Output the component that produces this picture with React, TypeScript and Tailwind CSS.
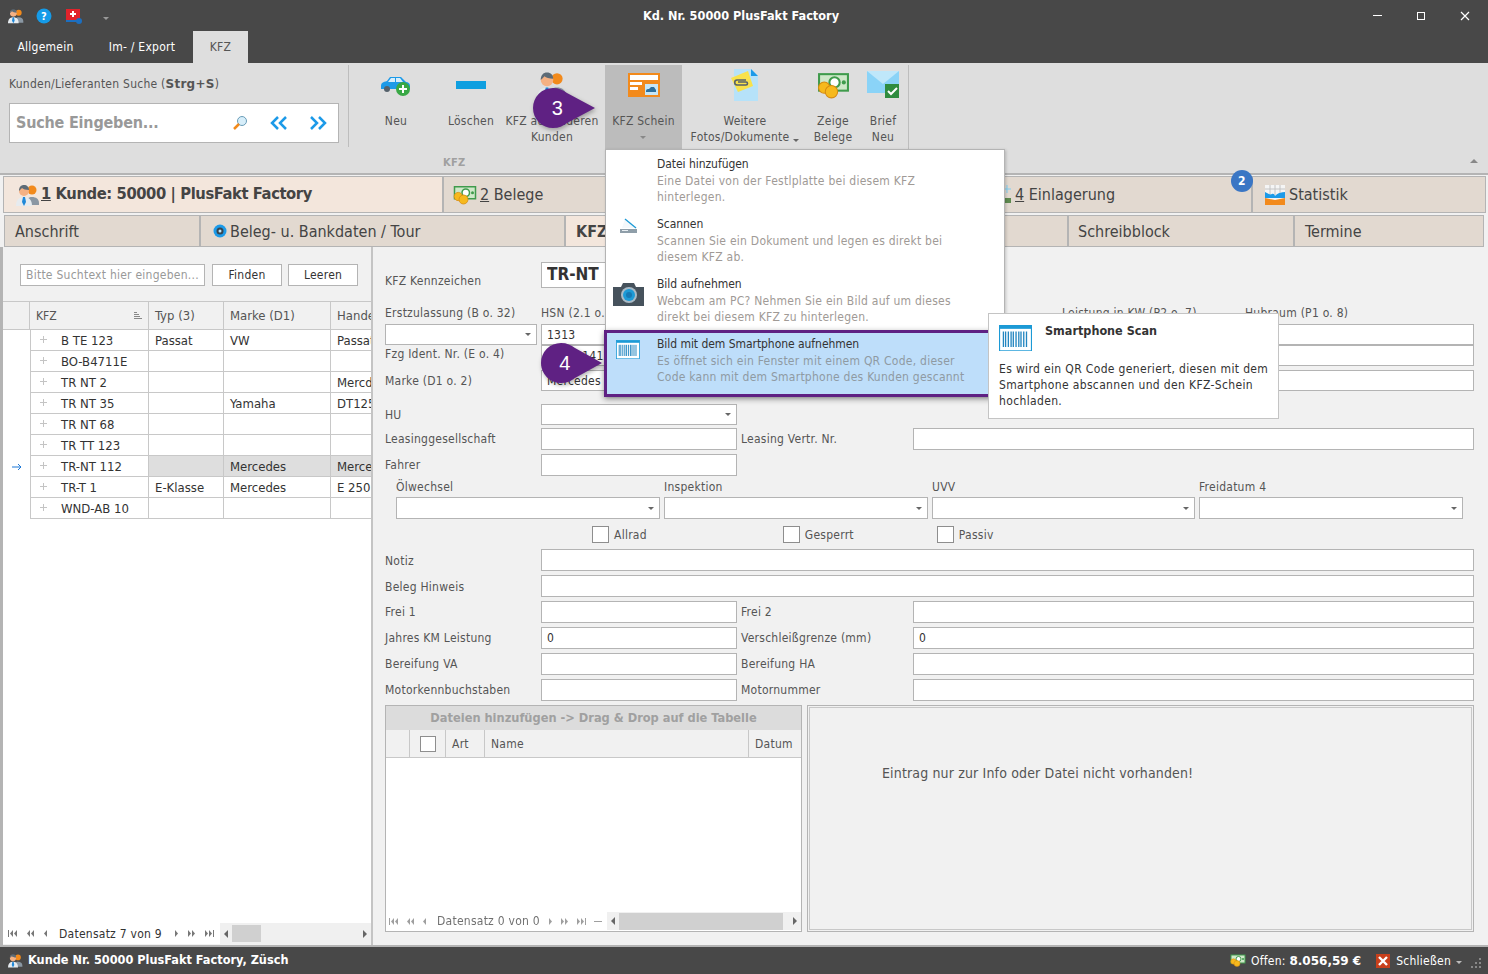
import type { ReactNode } from 'react';

const People = ({ size = 24 }: { size?: number }) => (
  <svg width={size} height={size} viewBox="0 0 24 24">
    <circle cx="16" cy="7" r="4.5" fill="#f28a1c" />
    <path d="M10 22c0-6 2-8 6-8s7 2 7 6v2z" fill="#8a97a3" />
    <circle cx="8" cy="8" r="5" fill="#f5b183" />
    <path d="M3 8c0-4 2-6 5-6s5 2 5 5c-3 0-6-1-7-2-1 1-2 2-3 3z" fill="#5d6b76" />
    <path d="M0 23c0-6 3-9 8-9s8 3 8 9z" fill="#e6ebef" />
    <path d="M7 14h2l1 5-2 4-2-4z" fill="#1f88d8" />
  </svg>
);

const Money = ({ w = 30, h = 24 }: { w?: number; h?: number }) => (
  <svg width={w} height={h} viewBox="0 0 32 26">
    <rect x="1" y="1" width="30" height="18" fill="#3f9b4c" />
    <rect x="3" y="3" width="26" height="14" fill="#cfe8c9" />
    <circle cx="17" cy="10" r="5" fill="#fff" stroke="#3f9b4c" strokeWidth="2" />
    <circle cx="26" cy="10" r="2" fill="#3f9b4c" />
    <circle cx="7" cy="15" r="5.5" fill="#f6b91d" stroke="#d58a10" />
    <circle cx="14" cy="19" r="6" fill="#f6b91d" stroke="#d58a10" />
  </svg>
);

const Barcode = ({ size = 24 }: { size?: number }) => (
  <svg width={size} height={size * 0.8} viewBox="0 0 30 24">
    <rect x="0.5" y="0.5" width="29" height="23" fill="#fff" stroke="#1c9ad6" />
    <rect x="0.5" y="0.5" width="29" height="3" fill="#1c9ad6" />
    <path d="M4 6v14M6 6v14M8.500 6v14M11 6v14M13 6v14M15.500 6v14M18 6v14M20 6v14M22.500 6v14M25 6v14" stroke="#2386c0" strokeWidth="1.200" />
  </svg>
);

const Caret = ({ className = 'border-t-[#666]' }: { className?: string }) => (
  <span className={`inline-block h-0 w-0 border-x-[3px] border-t-[3px] border-x-transparent ${className}`} />
);

const Field = ({ className = '', value = '', combo = false }: { className?: string; value?: string; combo?: boolean }) => (
  <div className={`flex items-center justify-between border border-[#b4b4b4] bg-white px-[5px] text-[#333] ${className}`}>
    <span className="truncate">{value}</span>
    {combo && <Caret />}
  </div>
);

const RibbonBtn = ({ w, icon, lines, caret = false, active = false, caretBelow = false }: { w: string; icon: ReactNode; lines: string[]; caret?: boolean; active?: boolean; caretBelow?: boolean }) => (
  <div className={`flex h-[84px] flex-col items-center ${w} ${active ? 'bg-[#bcbcbc]' : ''}`}>
    <div className="flex h-[40px] items-center justify-center">{icon}</div>
    <div className="mt-[8px] text-center leading-[16px] text-[#555]">
      {lines.map((l, i) => (
        <div key={l} className="whitespace-nowrap">
          {l}
          {caret && i === lines.length - 1 && (
            <span className="ml-1 inline-block align-middle">
              <Caret />
            </span>
          )}
        </div>
      ))}
      {caretBelow && (
        <div className="leading-[12px]">
          <Caret className="border-t-[#888]" />
        </div>
      )}
    </div>
  </div>
);

const Tab = ({ w, children, active = false, bold = false }: { w: string; children?: ReactNode; active?: boolean; bold?: boolean }) => (
  <div
    className={`flex h-full shrink-0 items-center overflow-hidden whitespace-nowrap border border-[#b4b4b4] ${w} ${active ? 'bg-[#f3e6dc]' : 'bg-[#e2d9d0]'} ${bold ? 'font-bold' : ''}`}
  >
    {children}
  </div>
);

const grid = [
  ['B TE 123', 'Passat', 'VW', 'Passat'],
  ['BO-B4711E', '', '', ''],
  ['TR NT 2', '', '', 'Mercd'],
  ['TR NT 35', '', 'Yamaha', 'DT125'],
  ['TR NT 68', '', '', ''],
  ['TR TT 123', '', '', ''],
  ['TR-NT 112', '', 'Mercedes', 'Merce'],
  ['TR-T 1', 'E-Klasse', 'Mercedes', 'E 250'],
  ['WND-AB 10', '', '', ''],
];

const NavGlyph = ({ n, bar = false }: { n: number; bar?: boolean }) => (
  <svg width={n * 4 + (bar ? 2 : 0)} height="7" viewBox={`0 0 ${n * 4 + (bar ? 2 : 0)} 7`} fill="#777">
    {bar && <rect x="0" y="0" width="1" height="7" />}
    {Array.from({ length: n }).map((_, i) => (
      <path key={i} d={`M${(bar ? 2 : 0) + i * 4 + 3} 0v7L${(bar ? 2 : 0) + i * 4} 3.500z`} />
    ))}
  </svg>
);

const NavGlyphR = ({ n, bar = false }: { n: number; bar?: boolean }) => (
  <span className="inline-flex -scale-x-100">
    <NavGlyph n={n} bar={bar} />
  </span>
);

const Pager = ({ text, compact = false }: { text: string; compact?: boolean }) => (
  <div className={`flex items-center ${compact ? 'opacity-70' : ''}`}>
    <div className={`flex items-center ${compact ? 'gap-[8px]' : 'gap-[9px]'}`}>
      <NavGlyph n={2} bar />
      <NavGlyph n={2} />
      <NavGlyph n={1} />
    </div>
    <span className={`whitespace-nowrap text-[#333] ${compact ? 'ml-[10px] mr-[8px]' : 'ml-[11px] mr-[12px]'}`}>{text}</span>
    <div className={`flex items-center ${compact ? 'gap-[8px]' : 'gap-[9px]'}`}>
      <NavGlyphR n={1} />
      <NavGlyphR n={2} />
      <NavGlyphR n={2} bar />
      {compact && <span className="h-px w-[8px] bg-[#777]" />}
    </div>
  </div>
);

const Scrollbar = ({ className, thumb }: { className: string; thumb: string }) => (
  <div className={`flex items-center bg-[#f0f0f0] ${className}`}>
    <span className="mx-[4px] h-0 w-0 border-y-[4px] border-r-[4px] border-y-transparent border-r-[#666]" />
    <div className={`h-[17px] bg-[#d0d0d0] ${thumb}`} />
    <div className="flex-1" />
    <span className="mx-[4px] h-0 w-0 border-y-[4px] border-l-[4px] border-y-transparent border-l-[#666]" />
  </div>
);

const FormRow = ({ top, label, label2, value = '', value2 = '' }: { top: string; label: string; label2: string; value?: string; value2?: string }) => (
  <div className={`flex h-[22px] items-center ${top}`}>
    <span className="w-[156px] text-[#555]">{label}</span>
    <Field className="h-full w-[196px]" value={value} />
    <span className="w-[176px] pl-[4px] text-[#555]">{label2}</span>
    <Field className="h-full w-[561px]" value={value2} />
  </div>
);

const Check = ({ label, className }: { label: string; className: string }) => (
  <div className={`flex items-center gap-[5px] text-[#555] ${className}`}>
    <span className="h-[17px] w-[17px] border border-[#8e8e8e] bg-white" />
    {label}
  </div>
);

const menu = [
  { t: 'Datei hinzufügen', d: ['Eine Datei von der Festlplatte bei diesem KFZ', 'hinterlegen.'], icon: null },
  {
    t: 'Scannen',
    d: ['Scannen Sie ein Dokument und legen es direkt bei', 'diesem KFZ ab.'],
    icon: (
      <svg width="17" height="15" viewBox="0 0 17 15" className="mt-[2px]">
        <path d="M2 10 5 1l11 9z" fill="#f4f8fb" />
        <path d="M5 1l11 9" fill="none" stroke="#1c9ad6" strokeWidth="1.300" />
        <rect x="0" y="11" width="17" height="4" fill="#8f9ea9" />
        <rect x="2" y="12" width="6" height="1" fill="#e8eef2" />
      </svg>
    ),
  },
  {
    t: 'Bild aufnehmen',
    d: ['Webcam am PC? Nehmen Sie ein Bild auf um dieses', 'direkt bei diesem KFZ zu hinterlegen.'],
    icon: (
      <svg width="33" height="26" viewBox="0 0 33 26" className="mt-[5px]">
        <path d="M1 6h8l2-4h11l2 4h8v19H1z" fill="#46525c" />
        <circle cx="17" cy="14" r="8" fill="#a9bac6" />
        <circle cx="17" cy="14" r="6" fill="#1c9ad6" />
        <circle cx="17" cy="14" r="3" fill="#1679b4" />
      </svg>
    ),
  },
];

export default function App() {
  return (
    <div className="relative flex h-[974px] w-[1488px] flex-col overflow-hidden bg-[#f1f1f1] font-['DejaVu_Sans','Noto_Sans',sans-serif] text-[12px] tracking-[0.25px] [font-stretch:condensed] text-[#444]">
      {/* title bar */}
      <div className="flex h-[31px] shrink-0 items-center bg-[#484848] pl-[8px] pr-[18px]">
        <People size={16} />
        <svg width="16" height="16" viewBox="0 0 16 16" className="ml-[12px]">
          <circle cx="8" cy="8" r="7.500" fill="#159be8" />
          <text x="8" y="12" textAnchor="middle" fontSize="11" fontWeight="700" fill="#fff">?</text>
        </svg>
        <svg width="16" height="16" viewBox="0 0 16 16" className="ml-[14px]">
          <rect x="0" y="1" width="14" height="11" fill="#e2232b" />
          <path d="M6 3h2v2h2v2H8v2H6V7H4V5h2z" fill="#fff" />
          <path d="M0 12h14v2H0z" fill="#1c6fc0" />
          <circle cx="13" cy="13" r="3" fill="#1c6fc0" />
        </svg>
        <span className="ml-[21px]">
          <Caret className="border-t-[#999]" />
        </span>
        <div className="flex-1 pt-px text-center text-[12.6px] font-bold tracking-normal text-white">Kd. Nr. 50000 PlusFakt Factory</div>
        <div className="flex items-center gap-[35px]">
          <span className="h-px w-[9px] bg-white" />
          <span className="h-[8px] w-[8px] border border-white" />
          <svg width="10" height="10" viewBox="0 0 10 10"><path d="M1 1l8 8M9 1l-8 8" stroke="#fff" strokeWidth="1.200" /></svg>
        </div>
      </div>

      {/* ribbon tabs */}
      <div className="flex h-[32px] shrink-0 items-stretch bg-[#484848]">
        <div className="flex w-[91px] items-center justify-center text-white">Allgemein</div>
        <div className="flex w-[102px] items-center justify-center text-white">Im- / Export</div>
        <div className="flex w-[55px] items-center justify-center bg-[#dedede] text-[#555]">KFZ</div>
      </div>

      {/* ribbon */}
      <div className="relative flex h-[110px] shrink-0 bg-[#dedede] pt-[2px]">
        <div className="w-[348px] pl-[9px] pt-[10px]">
          <div className="text-[#555]">
            Kunden/Lieferanten Suche (<b className="[font-stretch:normal]">Strg+S</b>)
          </div>
          <div className="mt-[10px] flex h-[40px] w-[330px] items-center border border-[#b4b4b4] bg-white pl-[6px]">
            <span className="w-[216px] text-[16px] font-bold tracking-[-0.2px] text-[#999]">Suche Eingeben...</span>
            <svg width="16" height="16" viewBox="0 0 16 16">
              <circle cx="10" cy="6" r="4.500" fill="#d7eefa" stroke="#6a9db8" />
              <path d="M7 9l-5 5" stroke="#f28a1c" strokeWidth="2.500" />
            </svg>
            <svg width="18" height="14" viewBox="0 0 18 14" className="ml-[22px]">
              <path d="M8 1 2 7l6 6M16 1l-6 6 6 6" fill="none" stroke="#1c9ae8" strokeWidth="2.500" />
            </svg>
            <svg width="18" height="14" viewBox="0 0 18 14" className="ml-[21px]">
              <path d="m2 1 6 6-6 6M10 1l6 6-6 6" fill="none" stroke="#1c9ae8" strokeWidth="2.500" />
            </svg>
          </div>
        </div>
        <div className="mb-[26px] w-px bg-[#bdbdbd]" />
        <div className="relative flex h-[84px] items-start">
          <RibbonBtn
            w="w-[94px]"
            lines={['Neu']}
            icon={
              <svg width="32" height="24" viewBox="0 0 32 24">
                <path d="M1 13c0-3 2-4 6-5l3-4h11l5 5c2 0 4 1 4 4v3H1z" fill="#1c9ae8" />
                <path d="M11 5h4v4H8zM16 5h4l3 4h-7z" fill="#d8eefb" />
                <circle cx="7" cy="16" r="3" fill="#55616b" />
                <circle cx="23" cy="16" r="7" fill="#39a845" />
                <path d="M23 12v8M19 16h8" stroke="#fff" strokeWidth="2" />
              </svg>
            }
          />
          <RibbonBtn w="w-[56px]" lines={['Löschen']} icon={<span className="h-[8px] w-[30px] bg-[#0f9fe0]" />} />
          <RibbonBtn w="w-[106px]" lines={['KFZ auf anderen', 'Kunden']} icon={<People size={30} />} />
          <RibbonBtn
            w="w-[77px]"
            active
            caretBelow
            lines={['KFZ Schein']}
            icon={
              <svg width="32" height="24" viewBox="0 0 32 24">
                <rect width="32" height="24" fill="#f28a1c" />
                <rect x="2" y="2" width="28" height="5" fill="#fff" />
                <rect x="2" y="9" width="12" height="3" fill="#fff" />
                <rect x="2" y="14" width="8" height="3" fill="#fff" />
                <rect x="17" y="11" width="13" height="11" fill="#c6e6f6" />
                <path d="M18 18c0-2 2-2 3-2l2-2h3l2 3v2H18z" fill="#2c6f9c" />
              </svg>
            }
          />
          <RibbonBtn
            w="w-[126px]"
            caret
            lines={['Weitere', 'Fotos/Dokumente']}
            icon={
              <svg width="30" height="34" viewBox="0 0 30 34">
                <path d="M4 1h17l7 7v25H4z" fill="#b6e2f9" />
                <path d="M21 1l7 7h-7z" fill="#1c9ae8" />
                <path d="M1 10 18 3l5 15-15 6z" fill="#f8e24c" />
                <path d="M16 12H7c-3 0-3 5 0 5h9c2 0 2-3 0-3H8" fill="none" stroke="#55616b" strokeWidth="1.600" />
              </svg>
            }
          />
          <RibbonBtn w="w-[50px]" lines={['Zeige', 'Belege']} icon={<Money w={33} h={27} />} />
          <RibbonBtn
            w="w-[50px]"
            lines={['Brief', 'Neu']}
            icon={
              <svg width="33" height="28" viewBox="0 0 33 28">
                <path d="M0 0h32v22H0z" fill="#8ad3f7" />
                <path d="M0 0l16 13L32 0z" fill="#bfe7fa" />
                <rect x="18" y="13" width="14" height="14" fill="#2f8c3f" />
                <path d="m21 20 3 3 6-6" fill="none" stroke="#fff" strokeWidth="2" />
              </svg>
            }
          />
          <div className="h-[84px] w-px bg-[#bdbdbd]" />
        </div>
        <span className="absolute left-[443px] top-[92px] text-[11px] font-bold text-[#a0a0a0]">KFZ</span>
        <svg width="8" height="5" viewBox="0 0 8 5" className="absolute left-[1470px] top-[95px]">
          <path d="M0 5l4-4 4 4z" fill="#888" />
        </svg>
      </div>

      {/* main tabs */}
      <div className="flex h-[40px] shrink-0 items-stretch gap-0 border-t-[2px] border-[#b4b4b4] bg-[#f1f1f1] pl-[3px] pr-[2px] pt-px text-[16px] tracking-normal">
        <Tab w="w-[440px]" active bold>
          <span className="ml-[12px] mr-[1px]"><People size={24} /></span>
          <span className="text-[16.4px] tracking-[-0.4px]"><u>1</u> Kunde: 50000 | PlusFakt Factory</span>
        </Tab>
        <Tab w="w-[270px]">
          <span className="ml-[9px] mr-[3px]"><Money w={24} h={20} /></span>
          <span><u>2</u> Belege</span>
        </Tab>
        <Tab w="w-[270px]" />
        <Tab w="w-[269px]">
          <svg width="16" height="22" viewBox="0 0 16 22" className="ml-[15px] shrink-0">
            <path d="M8 1v8M4 5h8" stroke="#7fd0f5" />
            <rect x="2" y="14" width="10" height="5" fill="#5e8a4f" />
          </svg>
          <span><u>4</u> Einlagerung</span>
        </Tab>
        <Tab w="w-[234px]">
          <svg width="22" height="22" viewBox="0 0 22 22" className="ml-[11px] mr-[3px] shrink-0">
            <rect x="1" y="1" width="20" height="20" fill="#f5f5f5" />
            <path d="M6 1v10M11 1v10M16 1v10M1 5h20" stroke="#c4c4c4" />
            <path d="M1 8c4 2 5 3 7 2s3 2 3 2 3-4 10-4v6H1z" fill="#1c9ae8" />
            <path d="M1 14l10 2 10-2v7H1z" fill="#f28a1c" />
          </svg>
          <span>Statistik</span>
        </Tab>
      </div>

      {/* sub tabs */}
      <div className="flex h-[34px] shrink-0 items-stretch pl-[4px] pt-[2px] text-[16px] tracking-normal">
        <Tab w="w-[196px]"><span className="ml-[10px] pt-px">Anschrift</span></Tab>
        <Tab w="w-[365px]">
          <svg width="14" height="14" viewBox="0 0 14 14" className="ml-[12px] mr-[3px]">
            <circle cx="7" cy="7" r="6.500" fill="#1c9ae8" />
            <circle cx="7" cy="7" r="3.500" fill="#38454f" />
            <circle cx="7" cy="7" r="1.500" fill="#bfe7fa" />
          </svg>
          <span className="pt-px">Beleg- u. Bankdaten / Tour</span>
        </Tab>
        <Tab w="w-[240px]" active bold><span className="ml-[10px] pt-px">KFZ</span></Tab>
        <Tab w="w-[263px]" />
        <Tab w="w-[226px]"><span className="ml-[9px] pt-px">Schreibblock</span></Tab>
        <Tab w="w-[190px]"><span className="ml-[10px] pt-px">Termine</span></Tab>
      </div>

      {/* body */}
      <div className="flex min-h-0 flex-1 border-b-[2px] border-l-[3px] border-[#b4b4b4]">
        {/* left list */}
        <div className="flex w-[370px] shrink-0 flex-col border-r-2 border-[#c4c4c4]">
          <div className="flex h-[54px] shrink-0 items-start gap-[7px] pl-[17px] pt-[17px]">
            <div className="flex h-[22px] w-[185px] items-center border border-[#b4b4b4] bg-white pl-[5px] text-[#999]">Bitte Suchtext hier eingeben...</div>
            <div className="flex h-[22px] w-[70px] items-center justify-center border border-[#b4b4b4] bg-white text-[#333]">Finden</div>
            <div className="-ml-px flex h-[22px] w-[70px] items-center justify-center border border-[#b4b4b4] bg-white text-[#333]">Leeren</div>
          </div>
          <div className="flex h-[29px] shrink-0 border-y border-[#c8c8c8] text-[13px] tracking-normal text-[#555]">
            <div className="w-[27px] border-r border-[#c8c8c8]" />
            <div className="flex w-[119px] items-center justify-between border-r border-[#c8c8c8] pl-[6px] pr-[6px] text-[12px]">
              KFZ
              <svg width="8" height="7" viewBox="0 0 8 7"><path d="M0 .5h3M0 2.500h5M0 4.500h6M0 6.500h8" stroke="#888" /></svg>
            </div>
            <div className="flex w-[75px] items-center border-r border-[#c8c8c8] pl-[6px]">Typ (3)</div>
            <div className="flex w-[107px] items-center border-r border-[#c8c8c8] pl-[6px]">Marke (D1)</div>
            <div className="flex w-[40px] items-center overflow-hidden whitespace-nowrap pl-[6px]">Hande</div>
          </div>
          <div className="flex-1 bg-white text-[13px] tracking-normal">
            {grid.map((r, i) => (
              <div key={r[0]} className="flex h-[21px] text-[#333]">
                <div className="flex w-[27px] items-center justify-center">
                  {i === 6 && (
                    <svg width="10" height="8" viewBox="0 0 10 8"><path d="M0 4h9M6 1l3 3-3 3" fill="none" stroke="#1c78d8" /></svg>
                  )}
                </div>
                <div className="flex w-[119px] items-center border-x border-b border-[#c8c8c8] pt-px">
                  <svg width="7" height="7" viewBox="0 0 7 7" className="ml-[9px] mr-[14px] mb-[2px]"><path d="M3.500 0v7M0 3.500h7" stroke="#c4c4c4" /></svg>
                  {r[0]}
                </div>
                <div className={`flex w-[75px] items-center border-b border-r border-[#c8c8c8] pl-[6px] pt-px ${i === 6 ? 'bg-[#dedede]' : ''}`}>{r[1]}</div>
                <div className={`flex w-[107px] items-center border-b border-r border-[#c8c8c8] pl-[6px] pt-px ${i === 6 ? 'bg-[#dedede]' : ''}`}>{r[2]}</div>
                <div className={`flex w-[40px] items-center overflow-hidden whitespace-nowrap border-b border-[#c8c8c8] pl-[6px] pt-px ${i === 6 ? 'bg-[#dedede]' : ''}`}>{r[3]}</div>
              </div>
            ))}
          </div>
          <div className="flex h-[21px] shrink-0 items-center bg-white pl-[5px]">
            <Pager text="Datensatz 7 von 9" />
            <Scrollbar className="ml-[6px] h-full flex-1" thumb="w-[29px] !h-[17px]" />
          </div>
          <div className="h-px shrink-0" />
        </div>

        {/* form */}
        <div className="flex min-w-0 flex-1 flex-col pl-[12px]">
          <div className="mt-[15px] flex h-[26px] items-center">
            <span className="w-[156px] pt-[11px] text-[#555]">KFZ Kennzeichen</span>
            <Field className="h-full w-[196px] text-[17px] font-bold tracking-normal" value="TR-NT" />
          </div>

          <div className="mt-[17px] flex h-[16px] items-center text-[#555]">
            <span className="w-[156px]">Erstzulassung (B o. 32)</span>
            <span className="w-[521px]">HSN (2.1 o. 2)</span>
            <span className="w-[183px]">Leistung in KW (P2 o. 7)</span>
            <span>Hubraum (P1 o. 8)</span>
          </div>
          <div className="mt-[3px] flex h-[21px]">
            <Field className="h-full w-[152px]" combo />
            <Field className="ml-[4px] h-full w-[196px]" value="1313" />
            <Field className="ml-[325px] h-full w-[179px]" />
            <Field className="ml-[4px] h-full w-[229px]" value="1597" />
          </div>
          <div className="flex h-[21px] items-center">
            <span className="w-[156px] pb-[3px] text-[#555]">Fzg Ident. Nr. (E o. 4)</span>
            <Field className="h-full w-[196px]" value="WDD2141234" />
            <Field className="ml-[325px] h-full w-[412px]" />
          </div>
          <div className="mt-[4px] flex h-[21px] items-center">
            <span className="w-[156px] text-[#555]">Marke (D1 o. 2)</span>
            <Field className="h-full w-[196px]" value="Mercedes" />
            <Field className="ml-[325px] h-full w-[412px]" />
          </div>
          <div className="mt-[13px] flex h-[21px] items-center">
            <span className="w-[156px] text-[#555]">HU</span>
            <Field className="h-full w-[196px]" combo />
          </div>
          <FormRow top="mt-[3px]" label="Leasinggesellschaft" label2="Leasing Vertr. Nr." />
          <div className="mt-[4px] flex h-[22px] items-center">
            <span className="w-[156px] text-[#555]">Fahrer</span>
            <Field className="h-full w-[196px]" />
          </div>
          <div className="mt-[2px] grid h-[17px] grid-cols-[268px_268px_267px_264px] pl-[11px] text-[#555]">
            <span>Ölwechsel</span>
            <span>Inspektion</span>
            <span>UVV</span>
            <span>Freidatum 4</span>
          </div>
          <div className="mt-[2px] grid h-[22px] grid-cols-[264px_264px_263px_264px] gap-x-[4px] pl-[11px]">
            <Field combo />
            <Field combo />
            <Field combo />
            <Field combo />
          </div>
          <div className="mt-[7px] flex h-[17px]">
            <Check label="Allrad" className="ml-[207px]" />
            <Check label="Gesperrt" className="ml-[136px]" />
            <Check label="Passiv" className="ml-[83px]" />
          </div>
          <div className="mt-[6px] flex h-[22px] items-center">
            <span className="w-[156px] pt-[2px] text-[#555]">Notiz</span>
            <Field className="h-full w-[933px]" />
          </div>
          <div className="mt-[4px] flex h-[22px] items-center">
            <span className="w-[156px] pt-[2px] text-[#555]">Beleg Hinweis</span>
            <Field className="h-full w-[933px]" />
          </div>
          <FormRow top="mt-[4px]" label="Frei 1" label2="Frei 2" />
          <FormRow top="mt-[4px]" label="Jahres KM Leistung" label2="Verschleißgrenze (mm)" value="0" value2="0" />
          <FormRow top="mt-[4px]" label="Bereifung VA" label2="Bereifung HA" />
          <FormRow top="mt-[4px]" label="Motorkennbuchstaben" label2="Motornummer" />

          <div className="mt-[4px] flex h-[227px]">
            <div className="flex w-[417px] flex-col border border-[#b4b4b4] bg-white">
              <div className="flex h-[24px] shrink-0 items-center justify-center bg-[#dcdcdc] text-[12.7px] font-bold tracking-normal text-[#a0a0a0]">Dateien hinzufügen -&gt; Drag &amp; Drop auf die Tabelle</div>
              <div className="flex h-[28px] shrink-0 border-b border-[#c8c8c8] bg-[#f1f1f1] text-[#555]">
                <div className="w-[24px] border-r border-[#c8c8c8]" />
                <div className="flex w-[36px] items-center justify-center border-r border-[#c8c8c8]">
                  <span className="h-[16px] w-[16px] border border-[#8e8e8e] bg-white" />
                </div>
                <div className="flex w-[39px] items-center border-r border-[#c8c8c8] pl-[6px]">Art</div>
                <div className="flex w-[264px] items-center border-r border-[#c8c8c8] pl-[6px]">Name</div>
                <div className="flex flex-1 items-center pl-[6px]">Datum</div>
              </div>
              <div className="flex-1" />
              <div className="flex h-[18px] shrink-0 items-center pl-[3px]">
                <Pager text="Datensatz 0 von 0" compact />
                <Scrollbar className="ml-[5px] h-full flex-1" thumb="w-[164px]" />
              </div>
              <div className="h-px" />
            </div>
            <div className="ml-[5px] flex w-[667px] items-start border border-[#b4b4b4] p-px">
              <div className="h-full w-full border border-[#c8c8c8] pl-[72px] pt-[55px] text-[14px] tracking-[0.15px] text-[#555]">Eintrag nur zur Info oder Datei nicht vorhanden!</div>
            </div>
          </div>
        </div>
      </div>

      {/* status bar */}
      <div className="flex h-[27px] shrink-0 items-center bg-[#484848] pl-[8px] pr-[6px] text-white">
        <People size={15} />
        <span className="ml-[5px] text-[12.6px] font-bold tracking-normal">Kunde Nr. 50000 PlusFakt Factory, Züsch</span>
        <div className="flex-1" />
        <Money w={16} h={13} />
        <span className="ml-[5px]">Offen: <b className="text-[12px] tracking-normal [font-stretch:normal]">8.056,59 €</b></span>
        <span className="ml-[15px] flex h-[14px] w-[14px] items-center justify-center bg-[#c8401c]">
          <svg width="10" height="10" viewBox="0 0 10 10"><path d="M1 1l8 8M9 1l-8 8" stroke="#fff" strokeWidth="2.400" /></svg>
        </span>
        <span className="ml-[6px]">Schließen</span>
        <span className="ml-[5px] mb-[2px]"><Caret className="border-t-[#bbb]" /></span>
        <svg width="11" height="11" viewBox="0 0 11 11" className="ml-[9px] mt-[6px]" fill="#888">
          <rect x="8" y="0" width="2" height="2" />
          <rect x="4" y="4" width="2" height="2" />
          <rect x="8" y="4" width="2" height="2" />
          <rect x="0" y="8" width="2" height="2" />
          <rect x="4" y="8" width="2" height="2" />
          <rect x="8" y="8" width="2" height="2" />
        </svg>
      </div>

      {/* dropdown menu */}
      <div className="absolute left-[605px] top-[149px] h-[247px] w-[400px] border border-[#b4b4b4] bg-white pt-[6px] shadow-[1px_1px_3px_rgba(0,0,0,0.2)]">
        {menu.map((m) => (
          <div key={m.t} className="flex h-[60px]">
            <div className="flex w-[44px] shrink-0 items-start justify-center">{m.icon}</div>
            <div className="ml-[7px] leading-[16px]">
              <div className="h-[17px] tracking-[-0.05px] text-[#333]">{m.t}</div>
              {m.d.map((l) => (
                <div key={l} className="text-[#a09a96]">{l}</div>
              ))}
            </div>
          </div>
        ))}
      </div>

      {/* highlighted item */}
      <div className="absolute left-[604px] top-[330px] flex h-[67px] w-[392px] border-[3px] border-[#5f2183] bg-[#bedefa] shadow-[0_2px_6px_rgba(0,0,0,0.4)]">
        <div className="mr-[8px] flex w-[42px] shrink-0 justify-center pt-[7px]"><Barcode /></div>
        <div className="pt-[3px] leading-[16px]">
          <div className="h-[17px] tracking-[-0.05px] text-[#333]">Bild mit dem Smartphone aufnehmen</div>
          <div className="text-[#8f9aa3]">Es öffnet sich ein Fenster mit einem QR Code, dieser</div>
          <div className="text-[#8f9aa3]">Code kann mit dem Smartphone des Kunden gescannt</div>
        </div>
      </div>

      {/* tooltip */}
      <div className="absolute left-[988px] top-[313px] h-[106px] w-[291px] border border-[#c4c4c4] bg-white pl-[10px] pt-[11px] text-[#333]">
        <div className="flex items-start">
          <Barcode size={33} />
          <b className="ml-[13px] text-[12.5px] leading-[12px] tracking-normal">Smartphone Scan</b>
        </div>
        <div className="mt-[10px] leading-[16px] tracking-[0.35px]">
          Es wird ein QR Code generiert, diesen mit dem
          <br />
          Smartphone abscannen und den KFZ-Schein
          <br />
          hochladen.
        </div>
      </div>

      {/* callouts */}
      <div className="absolute left-[533px] top-[88px] flex h-[40px] w-[63px]">
        <svg width="63" height="40" viewBox="0 0 63 40" className="absolute inset-0 drop-shadow-[1px_2px_2px_rgba(0,0,0,0.3)]">
          <path d="M20 0c6 0 10 2 14 5l28 15-28 15c-4 3-8 5-14 5a20 20 0 0 1 0-40z" fill="#5f2183" />
        </svg>
        <span className="relative w-[49px] pt-[8px] text-center font-['Liberation_Sans',sans-serif] text-[20px] leading-[24px] text-white">3</span>
      </div>
      <div className="absolute left-[541px] top-[343px] flex h-[40px] w-[62px]">
        <svg width="62" height="40" viewBox="0 0 62 40" className="absolute inset-0 drop-shadow-[1px_2px_2px_rgba(0,0,0,0.3)]">
          <path d="M20 0c6 0 10 2 14 5l27 15-27 15c-4 3-8 5-14 5a20 20 0 0 1 0-40z" fill="#5f2183" />
        </svg>
        <span className="relative w-[48px] pt-[8px] text-center font-['Liberation_Sans',sans-serif] text-[20px] leading-[24px] text-white">4</span>
      </div>

      {/* badge 2 */}
      <div className="absolute left-[1231px] top-[170px] flex h-[22px] w-[22px] items-center justify-center rounded-full bg-[#3a76c4] text-[12px] font-bold text-white">2</div>
    </div>
  );
}
